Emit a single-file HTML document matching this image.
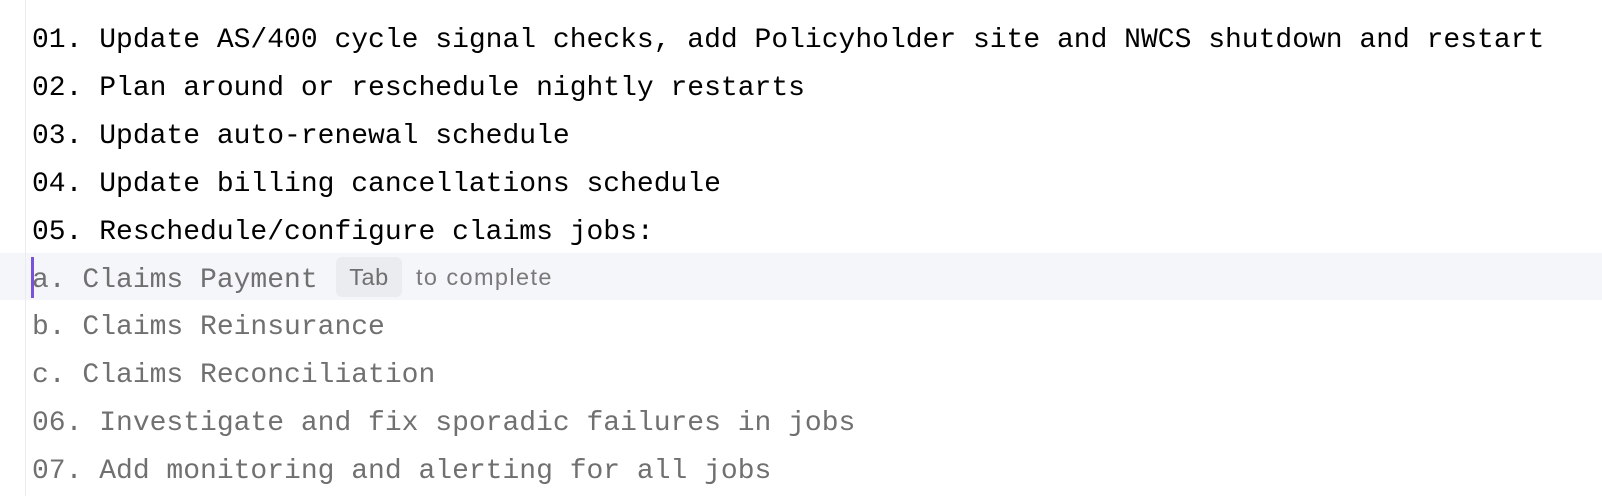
<!DOCTYPE html>
<html><head><style>
html,body{margin:0;padding:0;background:#fff;width:1602px;height:496px;overflow:hidden;position:relative}
.border{position:absolute;left:25px;top:0;width:1px;height:496px;background:#ebecf0}
.hl{position:absolute;left:0;top:253px;width:1602px;height:47px;background:#f5f6fa}
.caret{position:absolute;left:31px;top:257px;width:3px;height:41px;background:#7a52d8}
.lines{position:absolute;left:32px;top:17px;font-family:"Liberation Mono",monospace;font-size:28px;line-height:47.9px;white-space:pre}
.k{color:#000}.g{color:#707070}
.tab{position:absolute;left:336px;top:257px;width:66px;height:40px;background:#ebecf0;border-radius:6px;font-family:"Liberation Sans",sans-serif;font-size:23.5px;color:#6f6f6f;line-height:40px;text-align:center;letter-spacing:0.5px}
.tc{position:absolute;left:416px;top:257px;font-family:"Liberation Sans",sans-serif;font-size:23.5px;letter-spacing:1.4px;color:#7a7a7a;line-height:40px;white-space:nowrap}
</style></head><body>
<div class="hl"></div>
<div class="border"></div>
<div class="lines"><div class="k">01. Update AS/400 cycle signal checks, add Policyholder site and NWCS shutdown and restart</div><div class="k">02. Plan around or reschedule nightly restarts</div><div class="k">03. Update auto-renewal schedule</div><div class="k">04. Update billing cancellations schedule</div><div class="k">05. Reschedule/configure claims jobs:</div><div class="g">a. Claims Payment</div><div class="g">b. Claims Reinsurance</div><div class="g">c. Claims Reconciliation</div><div class="g">06. Investigate and fix sporadic failures in jobs</div><div class="g">07. Add monitoring and alerting for all jobs</div></div>
<div class="caret"></div>
<div class="tab">Tab</div>
<div class="tc">to complete</div>
</body></html>
